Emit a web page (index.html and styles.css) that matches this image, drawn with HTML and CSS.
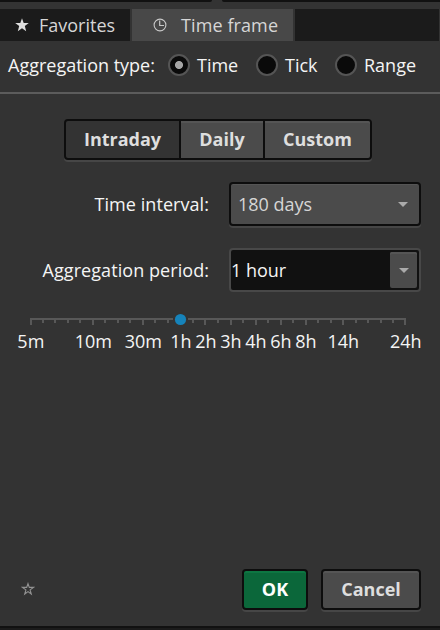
FILE: index.html
```html
<!DOCTYPE html>
<html lang="en">
<head>
<meta charset="utf-8">
<title>Time frame</title>
<link rel="stylesheet" href="styles.css">
</head>
<body>
<main class="dialog">
  <div class="top-edge"><i></i><i></i></div>
  <nav class="tabs">
    <div class="tab favorites">
      <svg class="star" width="14" height="14" viewBox="0 0 14 14"><path fill="#dedede" d="M7 .2 8.7 5H13.8L9.8 8.1 11.2 13.2 7 10.2 2.8 13.2 4.2 8.1.2 5H5.3Z"/></svg>
      <span>Favorites</span>
    </div>
    <div class="tab active">
      <svg class="clock" width="14" height="14" viewBox="0 0 14 14" fill="none" stroke="#c8c8c8"><circle cx="7" cy="7" r="5.9" stroke-width="1.1"/><path d="M6.7 2.5V7.5H11" stroke-width="1.2"/></svg>
      <span>Time frame</span>
    </div>
    <div class="tab-rest"></div>
  </nav>
  <div class="types">
    <span class="types-label">Aggregation type:</span>
    <label class="radio"><i class="dot checked"></i><span>Time</span></label>
    <label class="radio"><i class="dot"></i><span>Tick</span></label>
    <label class="radio"><i class="dot"></i><span>Range</span></label>
  </div>
  <div class="segments">
    <div class="segment selected"><span>Intraday</span></div>
    <div class="segment daily"><span>Daily</span></div>
    <div class="segment custom"><span>Custom</span></div>
  </div>
  <div class="field">
    <span class="field-label interval">Time interval:</span>
    <div class="select"><span>180 days</span>
      <svg width="10" height="5" viewBox="0 0 10 5"><path fill="#aaa" d="M0 0H10L5 5Z"/></svg>
    </div>
  </div>
  <div class="field second">
    <span class="field-label period">Aggregation period:</span>
    <div class="combo"><span>1 hour</span>
      <div class="combo-button"><svg width="10" height="5" viewBox="0 0 10 5"><path fill="#aaa" d="M0 0H10L5 5Z"/></svg></div>
    </div>
  </div>
  <svg class="slider" width="440" height="16" viewBox="0 312 440 16" shape-rendering="crispEdges">
    <path fill="#585858" d="M30 318H406V320H30Z"/>
    <path fill="#585858" d="M30 318h2v7h-2zM92 318h2v7h-2zM142 318h2v7h-2zM204 318h2v7h-2zM230 318h2v7h-2zM255 318h2v7h-2zM280 318h2v7h-2zM305 318h2v7h-2zM342 318h2v7h-2zM404 318h2v7h-2z"/>
    <path fill="#585858" d="M42 318h2v5h-2zM54 318h2v5h-2zM67 318h2v5h-2zM79 318h2v5h-2zM104 318h2v5h-2zM117 318h2v5h-2zM129 318h2v5h-2zM154 318h2v5h-2zM167 318h2v5h-2zM192 318h2v5h-2zM217 318h2v5h-2zM242 318h2v5h-2zM267 318h2v5h-2zM292 318h2v5h-2zM317 318h2v5h-2zM330 318h2v5h-2zM355 318h2v5h-2zM367 318h2v5h-2zM380 318h2v5h-2zM392 318h2v5h-2z"/>
    <path fill="#333" d="M173 317h15v8h-15z"/>
    <circle cx="180.5" cy="319.5" r="5.6" fill="#1683ba" shape-rendering="auto"/>
  </svg>
  <div class="scale">
    <span class="s0">5m</span><span class="s5">10m</span><span class="s9">30m</span><span class="s12">1h</span><span class="s14">2h</span><span class="s16">3h</span><span class="s18">4h</span><span class="s20">6h</span><span class="s22">8h</span><span class="s25">14h</span><span class="s30">24h</span>
  </div>
  <footer class="footer">
    <svg width="14" height="14" viewBox="0 0 14 14"><path fill="none" stroke="#929292" stroke-width="1.1" d="M7 1.6 8.3 5.4H12.5L9.1 7.9 10.3 12 7 9.6 3.7 12 4.9 7.9 1.5 5.4H5.7Z"/></svg>
    <div class="button ok"><span>OK</span></div>
    <div class="button cancel"><span>Cancel</span></div>
  </footer>
  <div class="bottom-edge"></div>
</main>
</body>
</html>
```
FILE: styles.css
```css
* { box-sizing: border-box; }
body {
  margin: 0;
  background: #333;
  color: #f5f5f5;
  font: 18px/24px "Open Sans", sans-serif;
}
.dialog {
  width: 440px;
  height: 630px;
  display: flex;
  flex-direction: column;
  overflow: hidden;
  white-space: nowrap;
}
svg { display: block; flex: none; }
.top-edge { display: flex; height: 2px; gap: 10px; margin-bottom: 7px; }
.top-edge i { width: 212px; background: #111; border-radius: 0 0 2px 0; }
.top-edge i + i { flex: 1; border-radius: 0 0 0 2px; }
.tabs { display: flex; height: 32px; gap: 2px; color: #d6d6d6; flex: none; }
.tab { display: flex; align-items: center; background: #1b1b1b; }
.favorites { width: 130px; padding-left: 15px; gap: 10px; }
.active { width: 161px; padding-left: 21px; gap: 14px; background: #484848; letter-spacing: .1px; }
.tab-rest { width: 144px; background: #1b1b1b; }
.types {
  display: flex;
  align-items: center;
  height: 53px;
  padding: 0 0 4px 8px;
  border-bottom: 2px solid #5c5c5c;
  flex: none;
}
.types-label { width: 160px; }
.radio { display: flex; align-items: center; gap: 7px; width: 88px; }
.radio + .radio + .radio { width: auto; }
.radio:nth-of-type(2) { width: 79px; }
.dot {
  width: 22px;
  height: 22px;
  border: 2px solid #555;
  border-radius: 50%;
  background: #0a0a0a;
  flex: none;
}
.checked { background: radial-gradient(circle, #a5a5a5 3.6px, #0a0a0a 4.4px); }
.segments {
  display: flex;
  gap: 2px;
  width: 308px;
  height: 41px;
  margin: 25px 0 0 64px;
  padding: 2px;
  border-radius: 4px;
  background: #0d0d0d;
  box-shadow: 0 2px #464646;
  font-weight: 700;
  color: #dedede;
  flex: none;
}
.segment {
  display: flex;
  align-items: center;
  justify-content: center;
  padding-bottom: 2px;
  background: #4b4b4b;
  box-shadow: inset 0 2px #555;
}
.selected { width: 113px; background: #333; box-shadow: none; border-radius: 2px 0 0 2px; }
.daily { width: 82px; }
.custom { width: 105px; border-radius: 0 2px 2px 0; }
.field { display: flex; align-items: center; margin: 22px 0 0; height: 44px; flex: none; }
.second { margin-top: 22px; }
.field-label { width: 209px; margin-right: 20px; text-align: right; letter-spacing: .06px; }
.select, .combo {
  display: flex;
  align-items: center;
  justify-content: space-between;
  width: 192px;
  height: 44px;
  border-radius: 4px;
}
.select {
  border: 2px solid #0d0d0d;
  background: #4b4b4b;
  box-shadow: 0 2px #464646, inset 0 1px #555;
  padding: 0 11px 0 7px;
  color: #d6d6d6;
}
.combo { border: 2px solid #484848; background: #111; padding-right: 2px; }
.combo-button {
  display: flex;
  align-items: center;
  justify-content: center;
  width: 27px;
  height: 36px;
  border-radius: 2px;
  background: #4b4b4b;
  box-shadow: inset 0 2px #555;
}
.slider { margin-top: 20px; }
.scale {
  display: grid;
  grid-template-columns: repeat(31, 12.5px);
  margin: 1px 0 0 24.6px;
  height: 24px;
}
.scale span { display: flex; justify-content: center; grid-row: 1; }
.s0 { grid-column: 1; }
.s5 { grid-column: 6; }
.s9 { grid-column: 10; }
.s12 { grid-column: 13; }
.s14 { grid-column: 15; }
.s16 { grid-column: 17; }
.s18 { grid-column: 19; }
.s20 { grid-column: 21; }
.s22 { grid-column: 23; }
.s25 { grid-column: 26; }
.s30 { grid-column: 31; }
.footer { display: flex; align-items: center; margin: auto 0 16px; padding-left: 21px; height: 42px; flex: none; }
.button {
  display: flex;
  align-items: center;
  justify-content: center;
  height: 41px;
  border: 2px solid #0d0d0d;
  border-radius: 4px;
  background: #4b4b4b;
  box-shadow: 0 2px #464646, inset 0 2px #555;
  font-weight: 700;
  color: #dedede;
}
.ok { width: 66px; margin: 0 13px 0 207px; background: #0b673a; color: #fff; box-shadow: 0 2px #464646, inset 0 2px #0d7642; }
.cancel { width: 100px; }
.bottom-edge { height: 4px; background: #1b1b1b; border-top: 2px solid #111; flex: none; }
```
